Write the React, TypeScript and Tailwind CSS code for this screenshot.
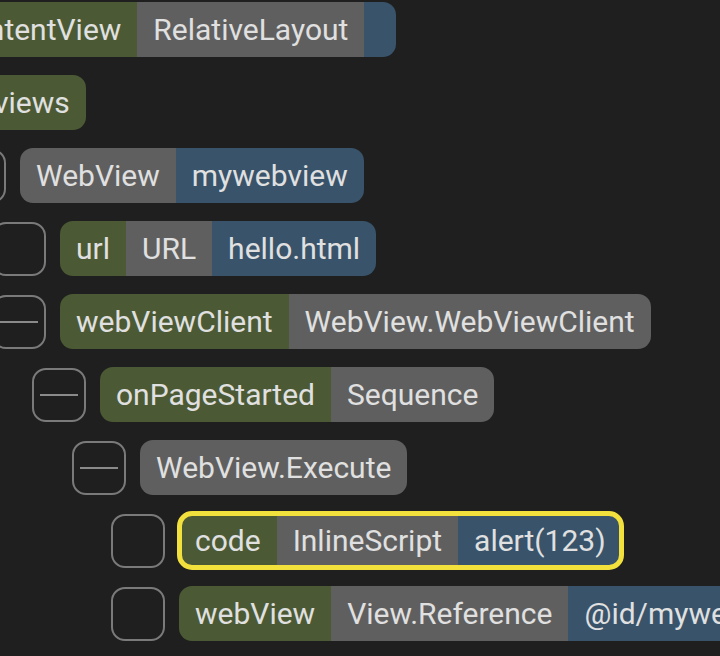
import type { ReactNode } from "react";

type Kind = "name" | "type" | "value";

const segColor: Record<Kind, string> = {
  name: "bg-[#4b5a34]",
  type: "bg-[#5f5f5f]",
  value: "bg-[#38536a]",
};

type Seg = { kind: Kind; text: string };

type Row = {
  indent: number; // px offset of the toggle's left edge
  toggle: "minus" | "empty" | "none";
  segs: Seg[];
  selected?: boolean;
};

const rows: Row[] = [
  {
    indent: -129,
    toggle: "none",
    segs: [
      { kind: "name", text: "contentView" },
      { kind: "type", text: "RelativeLayout" },
      { kind: "value", text: "" },
    ],
  },
  { indent: -90, toggle: "none", segs: [{ kind: "name", text: "views" }] },
  {
    indent: -48,
    toggle: "minus",
    segs: [
      { kind: "type", text: "WebView" },
      { kind: "value", text: "mywebview" },
    ],
  },
  {
    indent: -8,
    toggle: "empty",
    segs: [
      { kind: "name", text: "url" },
      { kind: "type", text: "URL" },
      { kind: "value", text: "hello.html" },
    ],
  },
  {
    indent: -8,
    toggle: "minus",
    segs: [
      { kind: "name", text: "webViewClient" },
      { kind: "type", text: "WebView.WebViewClient" },
    ],
  },
  {
    indent: 32,
    toggle: "minus",
    segs: [
      { kind: "name", text: "onPageStarted" },
      { kind: "type", text: "Sequence" },
    ],
  },
  {
    indent: 72,
    toggle: "minus",
    segs: [{ kind: "type", text: "WebView.Execute" }],
  },
  {
    indent: 111,
    toggle: "empty",
    selected: true,
    segs: [
      { kind: "name", text: "code" },
      { kind: "type", text: "InlineScript" },
      { kind: "value", text: "alert(123)" },
    ],
  },
  {
    indent: 111,
    toggle: "empty",
    segs: [
      { kind: "name", text: "webView" },
      { kind: "type", text: "View.Reference" },
      { kind: "value", text: "@id/mywebview" },
    ],
  },
];

function Toggle({ type }: { type: Row["toggle"] }) {
  if (type === "none") return <div className="w-[54px] h-[54px] shrink-0" />;
  return (
    <div className="w-[54px] h-[54px] shrink-0 rounded-[14px] border-2 border-[#7a7a7a] flex items-center justify-center">
      {type === "minus" && <div className="w-[38px] h-[2px] bg-[#8a8a8a]" />}
    </div>
  );
}

function Pill({ segs, selected }: { segs: Seg[]; selected?: boolean }): ReactNode {
  return (
    <div
      className={
        "flex h-[55px] shrink-0 rounded-[13px] overflow-hidden " +
        (selected ? "outline-[5px] outline-solid outline-[#f2e03c] -outline-offset-[3.5px]" : "")
      }
    >
      {segs.map((s, i) => (
        <div
          key={i}
          className={`${segColor[s.kind]} flex items-center px-4 text-[30px] text-[#e0e0e0] whitespace-nowrap`}
        >
          {s.text}
        </div>
      ))}
    </div>
  );
}

export default function App() {
  return (
    <div
      className="w-[720px] h-[656px] overflow-hidden bg-[#1f1f1f] pt-[2px] flex flex-col gap-[18px]"
      style={{ fontFamily: "Roboto, 'Noto Sans', sans-serif" }}
    >
      {rows.map((r, i) => (
        <div key={i} className="flex items-center gap-[14px] shrink-0" style={{ marginLeft: r.indent }}>
          <Toggle type={r.toggle} />
          <Pill segs={r.segs} selected={r.selected} />
        </div>
      ))}
    </div>
  );
}
